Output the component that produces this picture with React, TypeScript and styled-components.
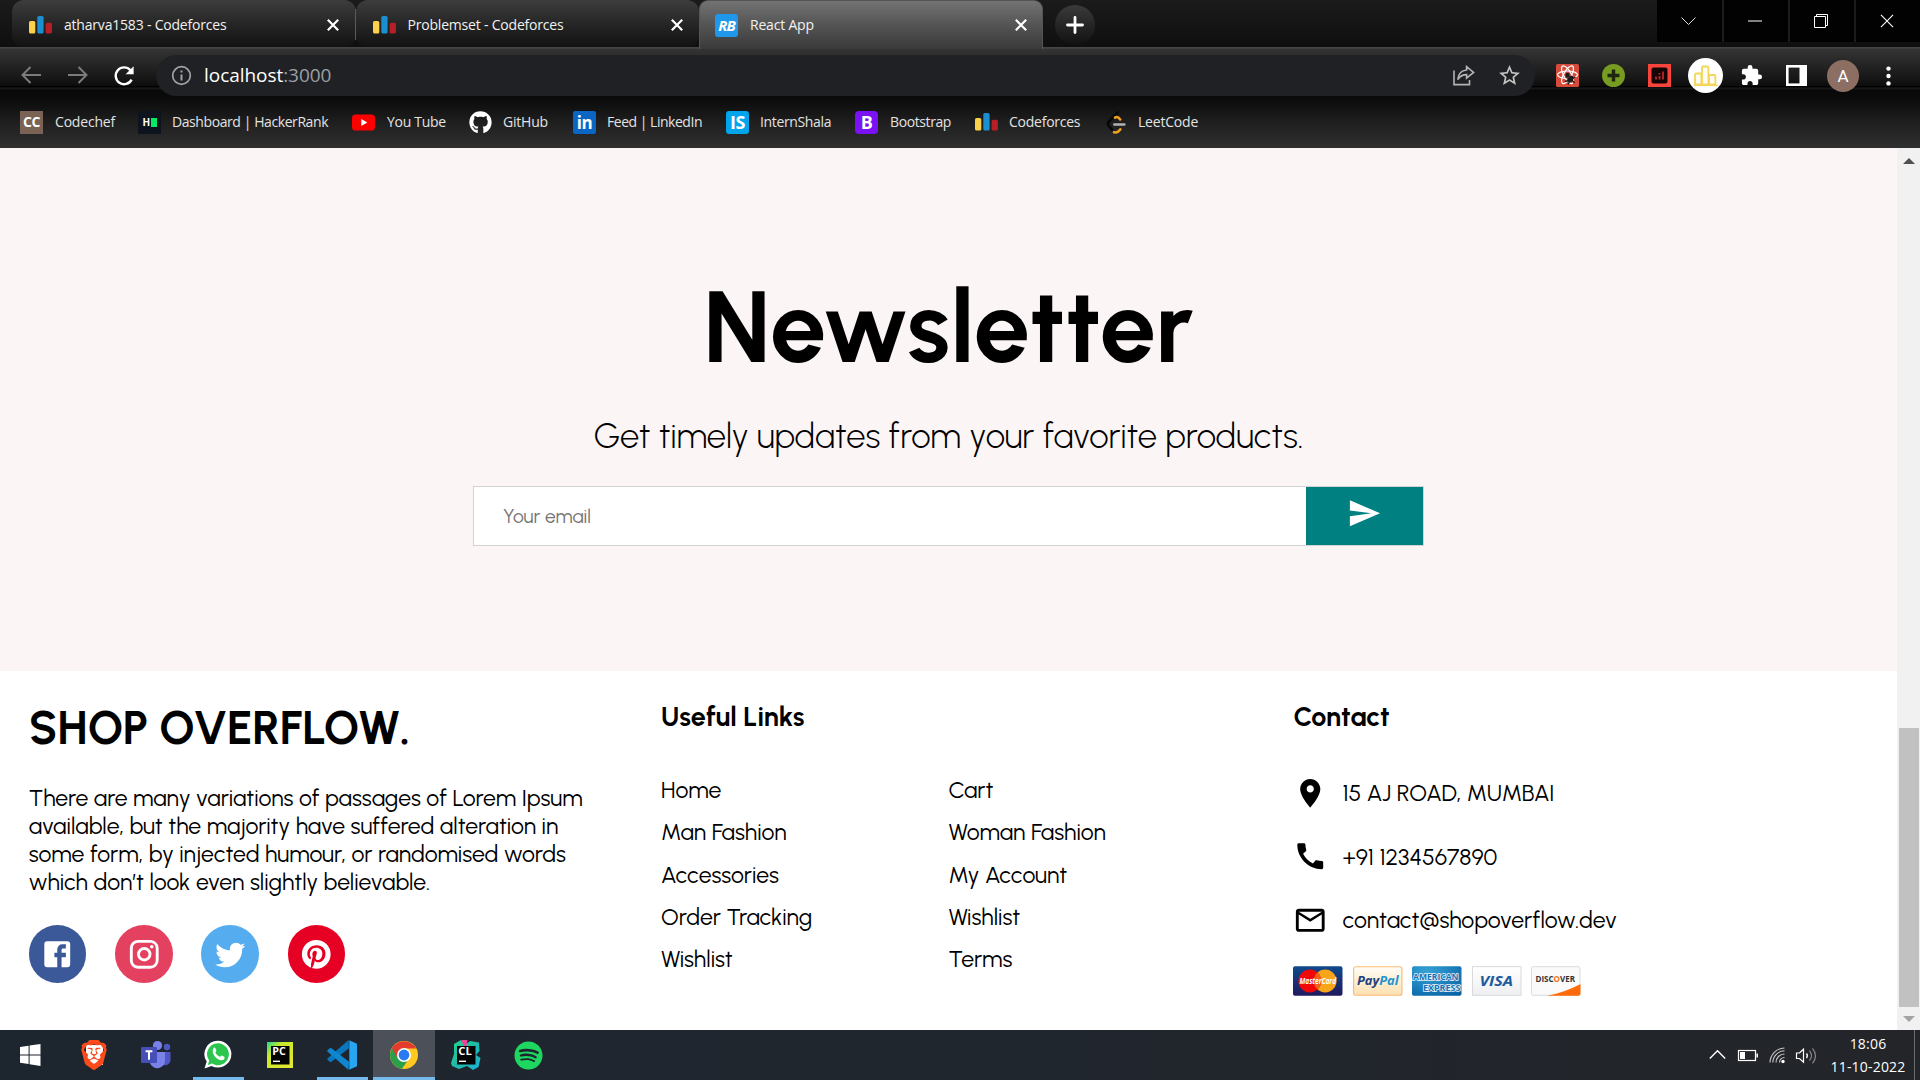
import React from 'react';
import styled, { createGlobalStyle, css } from 'styled-components';
import { FaGithub, FaSpotify } from 'react-icons/fa';
import { SiBrave } from 'react-icons/si';
import { MdExtension, MdStarOutline } from 'react-icons/md';

const ui = '"Segoe UI", "Open Sans", "Noto Sans", sans-serif';
const brand = 'Urbanist, Lato, sans-serif';

const GlobalStyle = createGlobalStyle`
  * { box-sizing: border-box; margin: 0; padding: 0; }
  body { width: 1920px; height: 1080px; overflow: hidden; background: #000; }
  svg { display: block; flex: none; }
`;

const Screen = styled.div`
  display: flex;
  flex-direction: column;
  width: 1920px;
  height: 1080px;
  font-family: ${ui};
`;

/* ---------- tab strip ---------- */

const TabStrip = styled.div`
  display: flex;
  height: 49px;
  padding-left: 12px;
  background: linear-gradient(#1b1b1b, #0f0f0f 47px, #484848 47px, #3c3c3c);
`;

const Tab = styled.div<{ $active?: boolean; $divider?: boolean }>`
  display: flex;
  align-items: center;
  width: 343.5px;
  height: 47px;
  padding: 3px 16px 0 17px;
  border-radius: 12px;
  background: linear-gradient(#3d3d3d, #262626 50%, #121212);
  color: #f1f1f1;
  ${p => p.$divider && css`
    border-image: linear-gradient(transparent 10px, #5a5a5a 10px, #5a5a5a 39px, transparent 39px) 1;
    border-right: 1px solid;
  `}
  ${p => p.$active && css`
    height: 49px;
    padding: 0 15px 0 15px;
    border: 1px solid #555;
    border-bottom: 0;
    border-radius: 9px 9px 0 0;
    background: linear-gradient(#737373, #575757 45%, #3a3a3a);
  `}
`;

const TabIcon = styled.span`
  display: flex;
  width: 23px;
  height: 23px;
  margin-right: 12px;
`;

const TabTitle = styled.span`
  flex: 1;
  font-size: 14px;
  letter-spacing: -0.2px;
  line-height: 20px;
  white-space: nowrap;
`;

const NewTab = styled.div`
  display: flex;
  align-items: center;
  justify-content: center;
  width: 40px;
  height: 40px;
  margin: 5px 0 0 12px;
  border-radius: 50%;
  background: linear-gradient(#3a3a3a, #111);
`;

const WindowButtons = styled.div`
  display: grid;
  grid-template-columns: 65px 64px 64px 64px;
  gap: 2px;
  width: 263px;
  height: 42px;
  margin-left: auto;
  background: #1c1c1c;
`;

const WindowButton = styled.div`
  display: flex;
  align-items: center;
  justify-content: center;
  padding-right: 2px;
  background: #020202;
`;

/* ---------- toolbar and bookmarks ---------- */

const ChromeBody = styled.div`
  height: 99px;
  background: linear-gradient(#343434, #161616 30px, #0c0c0c 37px, #000 37px, #000 38px, #1e1e1e 39px, #080808 41px, #0b0b0b 50px, #202020 75px, #2f2f2f 98px);
`;

const Toolbar = styled.div`
  display: flex;
  align-items: center;
  height: 53px;
  padding-left: 21px;
`;

const NavButtons = styled.div`
  display: flex;
  gap: 25px;
  width: 135px;
`;

const AddressBar = styled.div`
  display: flex;
  align-items: center;
  width: 1379px;
  height: 41px;
  padding: 0 13px 0 15px;
  border-radius: 21px;
  background: #202124;
`;

const Url = styled.span`
  flex: 1;
  margin: -2px 0 0 12px;
  color: #fff;
  font-size: 19px;
  letter-spacing: -0.05px;
  line-height: 26px;
`;

const Port = styled.span`
  color: #9aa0a6;
`;

const AddressActions = styled.div`
  display: flex;
  align-items: center;
  gap: 22px;
`;

const Extensions = styled.div`
  display: flex;
  align-items: center;
  padding-left: 21px;
  & > * { margin-right: 23px; }
`;

const CircleTile = styled.div`
  display: flex;
  align-items: center;
  justify-content: center;
  width: 35px;
  height: 35px;
  margin: 0 17px 0 -6px;
  border-radius: 50%;
  background: #fff;
`;

const Avatar = styled.div`
  width: 32px;
  height: 32px;
  margin: 0 27px 0 -3px;
  border-radius: 50%;
  background: #8d6e63;
  color: #fff;
  font: 17px/32px Roboto, sans-serif;
  text-align: center;
`;

const Bookmarks = styled.div`
  display: flex;
  align-items: center;
  height: 40px;
`;

const Bookmark = styled.div<{ $width: number; $gap: number; $track: number }>`
  display: flex;
  align-items: center;
  flex: none;
  gap: ${p => p.$gap}px;
  width: ${p => p.$width}px;
  color: #e3e3e3;
  font-size: 14px;
  letter-spacing: ${p => p.$track}px;
  line-height: 20px;
  white-space: nowrap;
  &:first-child { margin-left: 20px; }
`;

const Tile = styled.span<{ $bg: string; $size?: number; $radius?: number }>`
  display: flex;
  align-items: center;
  justify-content: center;
  flex: none;
  width: 23px;
  height: 23px;
  border-radius: ${p => p.$radius ?? 2}px;
  background: ${p => p.$bg};
  color: #fff;
  font: 700 ${p => p.$size ?? 15}px/1 "Open Sans", sans-serif;
  letter-spacing: -0.5px;
`;

const Script = styled.i`
  font: italic 700 15px/1 "Open Sans", sans-serif;
  letter-spacing: -1px;
`;

const Green = styled.span`
  width: 6px;
  height: 9px;
  margin-left: 1px;
  background: #00ea64;
`;

/* ---------- page ---------- */

const Viewport = styled.div`
  display: flex;
  height: 882px;
  font-family: ${brand};
  color: #000;
`;

const Page = styled.main`
  width: 1897px;
  background: #fff;
`;

const Scrollbar = styled.div`
  display: flex;
  flex-direction: column;
  align-items: center;
  width: 23px;
  padding: 10px 0 8px;
  background: #f1f1f1;
`;

const Thumb = styled.div`
  width: 20px;
  height: 279px;
  margin: auto 0 9px;
  background: #c1c1c1;
`;

const Newsletter = styled.section`
  display: flex;
  flex-direction: column;
  align-items: center;
  height: 523px;
  padding-top: 119px;
  background: #fcf5f5;
`;

const Title = styled.h1`
  font-size: 100.6px;
  font-weight: 700;
  line-height: 120px;
`;

const Tagline = styled.p`
  margin: 28px 0 29px;
  font-size: 34.5px;
  font-weight: 300;
  line-height: 42px;
`;

const EmailForm = styled.div`
  display: flex;
  width: 951px;
  height: 60px;
  border: 1px solid lightgray;
  background: #fff;
`;

const EmailInput = styled.input`
  flex: 1;
  padding-left: 29px;
  border: 0;
  outline: 0;
  font: 400 19.2px ${brand};
  &::placeholder { color: #757575; }
`;

const SendButton = styled.button`
  display: flex;
  justify-content: center;
  width: 117px;
  padding-top: 9px;
  border: 0;
  background: teal;
  color: #fff;
`;

const Footer = styled.footer`
  display: grid;
  grid-template-columns: repeat(3, 1fr);
`;

const Column = styled.div`
  padding: 30px 28.75px 0;
`;

const Logo = styled.h1`
  font-size: 46px;
  font-weight: 700;
  line-height: 55px;
`;

const Desc = styled.p`
  margin: 28px 0 29px;
  font-size: 23px;
  line-height: 28px;
`;

const Social = styled.div`
  display: flex;
  gap: 28.75px;
`;

const SocialIcon = styled.a<{ $bg: string }>`
  display: flex;
  align-items: center;
  justify-content: center;
  width: 57.5px;
  height: 57.5px;
  border-radius: 50%;
  background: ${p => p.$bg};
  color: #fff;
`;

const Heading = styled.h3`
  margin-bottom: 43px;
  font-size: 26.9px;
  font-weight: 700;
  line-height: 32px;
`;

const Links = styled.ul`
  display: grid;
  grid-template-columns: 1fr 1fr;
  grid-auto-rows: 42.25px;
  list-style: none;
  font-size: 23px;
  line-height: 28px;
`;

const ContactRow = styled.div`
  display: flex;
  align-items: center;
  gap: 14.5px;
  height: 34.5px;
  margin-bottom: 28.75px;
  font-size: 23px;
`;

const Cards = styled.div`
  display: flex;
  gap: 10px;
`;

/* ---------- taskbar ---------- */

const Taskbar = styled.div`
  display: flex;
  justify-content: space-between;
  height: 50px;
  background: linear-gradient(90deg, #1d252e, #20262e 50%, #232529);
  color: #fff;
`;

const Apps = styled.div`
  display: flex;
`;

const TaskApp = styled.div<{ $state?: 'running' | 'focused' }>`
  display: flex;
  align-items: center;
  justify-content: center;
  width: 62px;
  height: 50px;
  &:first-child { width: 63px; padding-right: 3px; }
  ${p => p.$state === 'running' && css`
    background: linear-gradient(#76b9ed, #76b9ed) center bottom / 51px 3px no-repeat;
  `}
  ${p => p.$state === 'focused' && css`
    background: linear-gradient(#76b9ed, #76b9ed) center bottom / 100% 3px no-repeat, #4c5159;
  `}
`;

const Tray = styled.div`
  display: flex;
  align-items: center;
`;

const Clock = styled.div`
  width: 84px;
  margin: 0 4px 0 6px;
  font-size: 14px;
  letter-spacing: 0.2px;
  line-height: 23px;
  text-align: center;
`;

const ShowDesktop = styled.div`
  width: 6px;
  height: 50px;
  border-left: 1px solid #6b6e72;
`;

/* ---------- drawings ---------- */

const Bars = () => (
  <svg width="23" height="23" viewBox="0 0 23 23">
    <rect x="0" y="7" width="6.3" height="12.5" rx="1.6" fill="#fbd14b" />
    <rect x="8.3" y="2" width="6.3" height="17.5" rx="1.6" fill="#1c8fd1" />
    <rect x="16.6" y="8.7" width="6.3" height="10.8" rx="1.6" fill="#b71f27" />
  </svg>
);

const Cross = ({ size = 12, w = 2.2 }: { size?: number; w?: number }) => (
  <svg width={size} height={size} viewBox="0 0 12 12" stroke="#fff" strokeWidth={w}>
    <path d="M.8 .8 11.2 11.2M11.2 .8 .8 11.2" />
  </svg>
);

const Plus = () => (
  <svg width="18" height="18" viewBox="0 0 18 18" stroke="#fff" strokeWidth="2.8" strokeLinecap="round">
    <path d="M9 1.5v15M1.5 9h15" />
  </svg>
);

const Arrow = ({ flip }: { flip?: boolean }) => (
  <svg width="21" height="20" viewBox="0 0 21 20" fill="none" stroke="#7c7c7c" strokeWidth="2">
    <path d={flip ? 'M1 10h18M11.5 2l8 8-8 8' : 'M20 10H2M9.5 2l-8 8 8 8'} />
  </svg>
);

const Reload = () => (
  <svg width="22" height="22" viewBox="0 0 22 22">
    <path d="M18.6 14.6A8.4 8.4 0 1 1 17.4 5.2" fill="none" stroke="#fff" strokeWidth="2.4" />
    <path d="M20.6 1.2v8h-8z" fill="#fff" />
  </svg>
);

const Info = () => (
  <svg width="21" height="21" viewBox="0 0 21 21" fill="none" stroke="#a0a4a8">
    <circle cx="10.5" cy="10.5" r="8.8" strokeWidth="1.7" />
    <path d="M10.5 9.4v6M10.5 5.5v2" strokeWidth="2" />
  </svg>
);

const Share = () => (
  <svg width="22" height="21" viewBox="0 0 22 21" fill="none" stroke="#b4b4b4" strokeWidth="1.6">
    <path d="M1 5.5V19.6H16.5V15" />
    <path d="M13.6 1.6 20.6 7.4 13.6 13V9.6C9.5 9.6 7 11 4.8 14.6 5.2 9 8.5 5.5 13.6 5Z" />
  </svg>
);

const ReactBug = () => (
  <svg width="23" height="23" viewBox="0 0 23 23">
    <rect width="23" height="23" rx="1.5" fill="#d84a3a" />
    <g fill="none" stroke="#fff" strokeWidth="1.2">
      <ellipse cx="11.5" cy="10.8" rx="10" ry="3.8" />
      <ellipse cx="11.5" cy="10.8" rx="10" ry="3.8" transform="rotate(60 11.5 10.8)" />
      <ellipse cx="11.5" cy="10.8" rx="10" ry="3.8" transform="rotate(120 11.5 10.8)" />
    </g>
    <ellipse cx="14.5" cy="15" rx="2.6" ry="3.8" fill="#1b1b1b" transform="rotate(35 14.5 15)" />
    <circle cx="11.5" cy="11" r="2.2" fill="#1b1b1b" />
    <path d="M9.5 13.5l3 1M9 17.5l4-1M19.5 13l-3 1.5M18.5 19l-2.5-3M12 20.5l1.5-3" stroke="#1b1b1b" strokeWidth="1.3" />
  </svg>
);

const GreenPlus = () => (
  <svg width="23" height="23" viewBox="0 0 23 23">
    <circle cx="11.5" cy="11.5" r="11.5" fill="#769c22" />
    <path d="M11.5 5.5v12M5.5 11.5h12" stroke="#20250f" strokeWidth="3.4" />
  </svg>
);

const RedChart = () => (
  <svg width="23" height="23" viewBox="0 0 23 23">
    <rect width="23" height="23" fill="#f8443a" />
    <rect x="3.5" y="3.5" width="16" height="16" rx="2" fill="#160405" />
    <path d="M8 15.5v-3M11.5 15.5v-3.6M11.5 10.5v-1.6M15 15.5v-8" stroke="#c22a2a" strokeWidth="1.7" />
  </svg>
);

const GoldBars = () => (
  <svg width="25" height="22" viewBox="0 0 25 22" fill="#fffdf3" stroke="#f3d65a" strokeWidth="1.8">
    <rect x="2" y="8.5" width="6.4" height="11" rx="1" />
    <rect x="9" y="1.5" width="6.4" height="18" rx="1" />
    <rect x="16" y="10" width="6.4" height="9.5" rx="1" />
    <path d="M.5 20.3h24" strokeWidth="1.6" />
  </svg>
);

const SidePanel = () => (
  <svg width="21" height="21" viewBox="0 0 21 21">
    <rect x="1.3" y="1.3" width="18.4" height="18.4" fill="none" stroke="#fff" strokeWidth="2.6" />
    <rect x="13.5" y="0" width="7.5" height="21" fill="#fff" />
  </svg>
);

const Dots = () => (
  <svg width="5" height="20" viewBox="0 0 5 20" fill="#fff">
    <circle cx="2.5" cy="2.6" r="2.2" /><circle cx="2.5" cy="10" r="2.2" /><circle cx="2.5" cy="17.4" r="2.2" />
  </svg>
);

const YouTube = () => (
  <svg width="23" height="23" viewBox="0 0 23 23">
    <rect y="3.5" width="23" height="16" rx="3.6" fill="#f00" />
    <path d="M9.3 8v7l6-3.5z" fill="#fff" />
  </svg>
);

const LeetCode = () => (
  <svg width="20" height="23" viewBox="0 0 20 23" fill="none" strokeWidth="2.6" strokeLinecap="round">
    <path d="M11.5 1.5 3 10.5a3.4 3.4 0 0 0 0 4.6l3.4 4" stroke="#070707" />
    <path d="M9 6.6c1.8-1.2 3.3-.8 5.2 1.8" stroke="#f2a11f" />
    <path d="M8 21.2c2.5.8 4.5 0 6.3-2.8" stroke="#f2a11f" />
    <path d="M8.3 13.5h10" stroke="#b3b3b3" />
  </svg>
);

const MuiIcon = ({ d, size = 34.5 }: { d: string; size?: number }) => (
  <svg width={size} height={size} viewBox="0 0 24 24" fill="currentColor"><path d={d} /></svg>
);

const paths = {
  send: 'M2.01 21 23 12 2.01 3 2 10l15 2-15 2z',
  room: 'M12 2C8.13 2 5 5.13 5 9c0 5.25 7 13 7 13s7-7.75 7-13c0-3.87-3.13-7-7-7zm0 9.5c-1.38 0-2.5-1.12-2.5-2.5s1.12-2.5 2.5-2.5 2.5 1.12 2.5 2.5-1.12 2.5-2.5 2.5z',
  phone: 'M20.01 15.38c-1.23 0-2.42-.2-3.53-.56-.35-.12-.74-.03-1.01.24l-1.57 1.97c-2.83-1.35-5.48-3.9-6.89-6.83l1.95-1.66c.27-.28.35-.67.24-1.02-.37-1.11-.56-2.3-.56-3.53 0-.54-.45-.99-.99-.99H4.19C3.65 3 3 3.24 3 3.99 3 13.28 10.73 21 20.01 21c.71 0 .99-.63.99-1.18v-3.45c0-.54-.45-.99-.99-.99z',
  mail: 'M20 4H4c-1.1 0-1.99.9-1.99 2L2 18c0 1.1.9 2 2 2h16c1.1 0 2-.9 2-2V6c0-1.1-.9-2-2-2zm0 14H4V8l8 5 8-5v10zm-8-7L4 6h16l-8 5z',
  facebook: 'M5 3h14a2 2 0 0 1 2 2v14a2 2 0 0 1-2 2H5a2 2 0 0 1-2-2V5a2 2 0 0 1 2-2m13 2h-2.5A3.5 3.5 0 0 0 12 8.5V11h-2v3h2v7h3v-7h3v-3h-3V9a1 1 0 0 1 1-1h2V5z',
  instagram: 'M7.8 2h8.4C19.4 2 22 4.6 22 7.8v8.4a5.8 5.8 0 0 1-5.8 5.8H7.8C4.6 22 2 19.4 2 16.2V7.8A5.8 5.8 0 0 1 7.8 2m-.2 2A3.6 3.6 0 0 0 4 7.6v8.8C4 18.39 5.61 20 7.6 20h8.8a3.6 3.6 0 0 0 3.6-3.6V7.6C20 5.61 18.39 4 16.4 4H7.6m9.65 1.5a1.25 1.25 0 0 1 1.25 1.25A1.25 1.25 0 0 1 17.25 8 1.25 1.25 0 0 1 16 6.75a1.25 1.25 0 0 1 1.25-1.25M12 7a5 5 0 0 1 5 5 5 5 0 0 1-5 5 5 5 0 0 1-5-5 5 5 0 0 1 5-5m0 2a3 3 0 0 0-3 3 3 3 0 0 0 3 3 3 3 0 0 0 3-3 3 3 0 0 0-3-3z',
  twitter: 'M22.46 6c-.77.35-1.6.58-2.46.69.88-.53 1.56-1.37 1.88-2.38-.83.5-1.75.85-2.72 1.05C18.37 4.5 17.26 4 16 4c-2.35 0-4.27 1.92-4.27 4.29 0 .34.04.67.11.98C8.28 9.09 5.11 7.38 3 4.79c-.37.63-.58 1.37-.58 2.15 0 1.49.75 2.81 1.91 3.56-.71 0-1.37-.2-1.95-.5v.03c0 2.08 1.48 3.82 3.44 4.21a4.22 4.22 0 0 1-1.93.07 4.28 4.28 0 0 0 4 2.98 8.521 8.521 0 0 1-5.33 1.84c-.34 0-.68-.02-1.02-.06C3.44 20.29 5.7 21 8.12 21 16 21 20.33 14.46 20.33 8.79c0-.19 0-.37-.01-.56.84-.6 1.56-1.36 2.14-2.23z',
  pinterest: 'M9.04 21.54c.96.29 1.93.46 2.96.46a10 10 0 0 0 10-10A10 10 0 0 0 12 2 10 10 0 0 0 2 12c0 4.25 2.67 7.9 6.44 9.34-.09-.78-.18-2.07 0-2.96l1.15-4.94s-.29-.58-.29-1.5c0-1.38.86-2.41 1.84-2.41.86 0 1.26.63 1.26 1.44 0 .86-.57 2.09-.86 3.27-.17.98.52 1.84 1.52 1.84 1.78 0 3.16-1.9 3.16-4.58 0-2.4-1.72-4.04-4.19-4.04-2.82 0-4.48 2.1-4.48 4.31 0 .86.28 1.73.74 2.3.09.06.09.14.06.29l-.29 1.09c0 .17-.11.23-.28.11-1.28-.56-2.02-2.38-2.02-3.85 0-3.16 2.24-6.03 6.56-6.03 3.44 0 6.12 2.47 6.12 5.75 0 3.44-2.13 6.2-5.18 6.2-.97 0-1.92-.52-2.26-1.13l-.67 2.37c-.23.86-.86 2.01-1.29 2.7v-.03z',
};

const CardSvg = styled.svg.attrs({ width: 49.5, height: 30, viewBox: '0 0 50 30' })`
  overflow: visible;
  font-family: "Open Sans", sans-serif;
  font-weight: 700;
`;

const Slanted = styled.text`
  font-style: italic;
`;

const PaymentCards = () => (
  <Cards>
    <CardSvg>
      <defs><linearGradient id="mc" x2="0" y2="1"><stop stopColor="#0f4a8c" /><stop offset="1" stopColor="#201a5e" /></linearGradient></defs>
      <rect width="50" height="30" rx="2" fill="url(#mc)" />
      <circle cx="32.5" cy="15" r="11.5" fill="#f9a51a" />
      <circle cx="17" cy="15" r="11.5" fill="#f00808" />
      <path d="M24.75 6.5a11.5 11.5 0 0 1 0 17 11.5 11.5 0 0 1 0-17z" fill="#f4601a" />
      <Slanted x="6.5" y="18.5" fontSize="9" textLength="37" lengthAdjust="spacingAndGlyphs" fill="#fff">MasterCard</Slanted>
    </CardSvg>
    <CardSvg>
      <defs><linearGradient id="pp" x2="0" y2="1"><stop stopColor="#fffdf8" /><stop offset="1" stopColor="#fde0b0" /></linearGradient></defs>
      <rect x=".6" y=".6" width="48.8" height="28.8" rx="2" fill="url(#pp)" stroke="#f9bd76" strokeWidth="1.2" />
      <Slanted x="4" y="19" fontSize="12.5" textLength="42" lengthAdjust="spacingAndGlyphs" fill="#1d3f80">Pay<tspan fill="#1f93d0">Pal</tspan></Slanted>
    </CardSvg>
    <CardSvg>
      <defs><radialGradient id="ax" cx=".3" cy=".2" r="1"><stop stopColor="#36a3d6" /><stop offset="1" stopColor="#0560a4" /></radialGradient></defs>
      <rect width="50" height="30" rx="2" fill="url(#ax)" />
      <g fill="#1673b5" stroke="#e7f4fb" strokeWidth="1.6" paintOrder="stroke" fontSize="9.5">
        <text x="1" y="14.5" textLength="46" lengthAdjust="spacingAndGlyphs">AMERICAN</text>
        <text x="11" y="25" textLength="38" lengthAdjust="spacingAndGlyphs">EXPRESS</text>
      </g>
    </CardSvg>
    <CardSvg>
      <defs>
        <linearGradient id="vi" x2="0" y2="1"><stop stopColor="#fff" /><stop offset="1" stopColor="#eeeff1" /></linearGradient>
        <linearGradient id="vt" x2="1" y2=".25"><stop offset=".08" stopColor="#f2ac2c" /><stop offset=".14" stopColor="#1f5a9c" /></linearGradient>
      </defs>
      <rect x=".5" y=".5" width="49" height="29" fill="url(#vi)" stroke="#d9dadb" />
      <Slanted x="7.5" y="20.5" fontSize="14.5" textLength="34" lengthAdjust="spacingAndGlyphs" fill="url(#vt)">VISA</Slanted>
    </CardSvg>
    <CardSvg>
      <rect x=".5" y=".5" width="49" height="29" rx="2" fill="#fafafa" stroke="#dcdcdc" />
      <path d="M16 30c13-2.5 24-6.5 34-12v10a2 2 0 0 1-2 2z" fill="#ff6b0a" />
      <text x="4.5" y="16.5" fontSize="8.5" textLength="40" lengthAdjust="spacingAndGlyphs" fill="#333">DISC<tspan fill="#f36f21">O</tspan>VER</text>
    </CardSvg>
  </Cards>
);

const Windows = () => (
  <svg width="21" height="22" viewBox="0 0 21 22" fill="#fff">
    <path d="M0 3 8.6 1.8V10.4H0zM9.6 1.6 20.5 0V10.4H9.6zM0 11.4H8.6V20L0 18.8zM9.6 11.4H20.5V22L9.6 20.3z" />
  </svg>
);

const BraveMark = styled.span`
  display: flex;
  background: linear-gradient(#fff, #fff) center / 17px 20px no-repeat;
`;

const Teams = () => (
  <svg width="30" height="30" viewBox="0 0 30 30">
    <circle cx="26" cy="7" r="3.2" fill="#4f57c4" />
    <path d="M20 12h9.5v8.5a5.5 5.5 0 0 1-9.5 3z" fill="#4f57c4" />
    <circle cx="16.5" cy="5.5" r="4.6" fill="#7a82ea" />
    <path d="M9 12h15v9a7.7 7.7 0 0 1-15 2z" fill="#7a82ea" />
    <rect y="7" width="16" height="16" rx="1.2" fill="#464eb8" />
    <path d="M4.6 11.3h6.8M8 11.3v8.5" stroke="#fff" strokeWidth="2" />
  </svg>
);

const WhatsApp = () => (
  <svg width="28" height="30" viewBox="0 0 28 30">
    <path d="M14 .8A13.3 13.3 0 0 1 14 27.5 13.5 13.5 0 0 1 7.5 26L.5 28.5 2.7 21.5A13.3 13.3 0 0 1 14 .8z" fill="#fff" />
    <path d="M14 3.2a11 11 0 1 1-6 20.3l-4.2 1.4 1.4-4.2A11 11 0 0 1 14 3.2z" fill="#2cc64f" />
    <path d="M9.3 8.2c.8-.9 1.7-.8 2.1.1l.9 2.2c.3.7-1.1 1.7-.9 2.2 1 1.8 2.5 3.1 4.4 4 .7.2 1.3-1.5 2-1.2l2.4 1.2c.7.4.4 1.9-.4 2.7-3.4 3.3-13.7-4.2-10.5-11.2z" fill="#fff" />
  </svg>
);

const JetTile = ({ label, clion }: { label: string; clion?: boolean }) => (
  <svg width="30" height="30" viewBox="0 0 30 30">
    <defs>
      <linearGradient id="pc" x2="1" y2="1"><stop stopColor="#21d789" /><stop offset=".3" stopColor="#c8ea2c" /><stop offset="1" stopColor="#e6e832" /></linearGradient>
      <linearGradient id="cl" x2="1" y2="1"><stop stopColor="#21d789" /><stop offset=".5" stopColor="#1fb9a8" /><stop offset="1" stopColor="#18b5d8" /></linearGradient>
    </defs>
    {clion
      ? <><path d="M3 4 10 0 14 5 19 1 28 2.5 28.5 11 25 15 29.5 18 27.5 27 22 30 16 26 8 29 1 26 0 23 3 14z" fill="url(#cl)" /><path d="M10.5 0h6l-1 6h-3z" fill="#f0439a" /></>
      : <rect x="2" y="2" width="26" height="26" fill="url(#pc)" />}
    <rect x="6" y="6" width="18.5" height="18.5" fill="#050505" />
    <text x="7.3" y="15" fontSize="10" fontWeight="700" fontFamily="Open Sans, sans-serif" fill="#fff" textLength="13.5" lengthAdjust="spacingAndGlyphs">{label}</text>
    <path d="M8 21.3h7" stroke="#fff" strokeWidth="1.4" />
  </svg>
);

const VSCode = () => (
  <svg width="30" height="30" viewBox="0 0 30 30">
    <path d="M22 8.2 4.5 21.8a1.4 1.4 0 0 1-1.7 0L.7 20a1.3 1.3 0 0 1 0-1.8L21.5 0z" fill="#0a76bd" />
    <path d="M22 21.8 4.5 8.2a1.4 1.4 0 0 0-1.7 0L.7 10a1.3 1.3 0 0 0 0 1.8L21.5 30z" fill="#0e86d0" />
    <path d="M21.5 0 29 3.3a1.6 1.6 0 0 1 1 1.5v20.4a1.6 1.6 0 0 1-1 1.5L21.5 30c1 0 .8-.8.8-2V2c0-1.2.2-2-.8-2z" fill="#27a4f2" />
  </svg>
);

const Chrome = () => (
  <svg width="28" height="28" viewBox="0 0 28 28">
    <circle cx="14" cy="14" r="14" fill="#ffc91f" />
    <path d="M14 14 1.88 7A14 14 0 0 0 12 27.85L19.5 17z" fill="#2c9f4b" />
    <path d="M14 14 6.6 15.5 1.88 7A14 14 0 0 1 26.12 7.5H14z" fill="#e33b2e" />
    <circle cx="14" cy="14" r="7" fill="#fff" />
    <circle cx="14" cy="14" r="5.4" fill="#2a7bf0" />
  </svg>
);

const TrayIcons = () => (
  <svg width="112" height="20" viewBox="0 0 112 20" fill="none" stroke="#fff">
    <path d="M1.800 13.500 9.500 5.700 17.200 13.500" strokeWidth="1.4" />
    <rect x="30.5" y="5.5" width="17" height="10" strokeWidth="1.2" />
    <path d="M49.2 8.5v4" strokeWidth="1.5" />
    <rect x="32" y="7" width="5" height="7" fill="#fff" stroke="none" />
    <circle cx="75" cy="16.5" r="1.7" fill="#fff" stroke="none" />
    <path d="M71.5 17.5a5 5 0 0 1 5-5M68 17.5a8.5 8.5 0 0 1 8.5-8.5M64.8 17.5A12 12 0 0 1 76.5 5.8M62 17.5A14.8 14.8 0 0 1 76.5 3" stroke="#c9c9c9" strokeWidth="1.1" />
    <path d="M88.5 8h3l4-3.8v13L91.5 13.5h-3z" strokeWidth="1.2" />
    <path d="M98.5 8.5q1.7 2.2 0 4.5" strokeWidth="1.3" />
    <path d="M101.5 5.7q4 5 0 10M104.5 3.3q6 7.5 0 15" stroke="#85878a" strokeWidth="1.2" />
  </svg>
);

/* ---------- data ---------- */

const links = [
  'Home', 'Cart', 'Man Fashion', 'Woman Fashion', 'Accessories',
  'My Account', 'Order Tracking', 'Wishlist', 'Wishlist', 'Terms',
];

const bookmarks: { label: string; width: number; gap: number; track: number; icon: React.ReactNode }[] = [
  { label: 'Codechef', width: 118, gap: 12, track: -0.19, icon: <Tile $bg="#7a6254" $size={14} $radius={0}>CC</Tile> },
  { label: 'Dashboard | HackerRank', width: 214, gap: 11, track: -0.42, icon: <Tile $bg="#0e141e" $size={10} $radius={0}>H<Green /></Tile> },
  { label: 'You Tube', width: 117, gap: 12, track: -0.28, icon: <YouTube /> },
  { label: 'GitHub', width: 104, gap: 11, track: -0.2, icon: <FaGithub size={23} color="#fff" /> },
  { label: 'Feed | LinkedIn', width: 153, gap: 11, track: -0.48, icon: <Tile $bg="#0a66c2" $size={17}>in</Tile> },
  { label: 'InternShala', width: 129, gap: 11, track: -0.36, icon: <Tile $bg="#00a5ec" $size={18} $radius={3}>IS</Tile> },
  { label: 'Bootstrap', width: 120, gap: 12, track: -0.4, icon: <Tile $bg="#7a12f5" $size={18} $radius={4}>B</Tile> },
  { label: 'Codeforces', width: 131, gap: 11, track: -0.25, icon: <Bars /> },
  { label: 'LeetCode', width: 100, gap: 12, track: -0.2, icon: <LeetCode /> },
];

export default function App() {
  return (
    <Screen>
      <GlobalStyle />
      <TabStrip>
        <Tab $divider><TabIcon><Bars /></TabIcon><TabTitle>atharva1583 - Codeforces</TabTitle><Cross /></Tab>
        <Tab><TabIcon><Bars /></TabIcon><TabTitle>Problemset - Codeforces</TabTitle><Cross /></Tab>
        <Tab $active>
          <TabIcon><Tile $bg="#1f98ec" $radius={3}><Script>RB</Script></Tile></TabIcon>
          <TabTitle>React App</TabTitle><Cross />
        </Tab>
        <NewTab><Plus /></NewTab>
        <WindowButtons>
          <WindowButton><svg width="15" height="9" viewBox="0 0 15 9" fill="none" stroke="#ddd"><path d="M.5 .5l7 7 7-7" /></svg></WindowButton>
          <WindowButton><svg width="14" height="2" viewBox="0 0 14 2"><rect y=".5" width="14" height="1" fill="#fff" /></svg></WindowButton>
          <WindowButton><svg width="14" height="14" viewBox="0 0 14 14" fill="none" stroke="#fff"><path d="M.5 2.5h11v11H.5zM2.5 2.5v-2h11v11h-2" /></svg></WindowButton>
          <WindowButton><Cross size={14} w={0.95} /></WindowButton>
        </WindowButtons>
      </TabStrip>
      <ChromeBody>
        <Toolbar>
          <NavButtons><Arrow /><Arrow flip /><Reload /></NavButtons>
          <AddressBar>
            <Info />
            <Url>localhost<Port>:3000</Port></Url>
            <AddressActions><Share /><MdStarOutline size={25} color="#c4c4c4" /></AddressActions>
          </AddressBar>
          <Extensions>
            <ReactBug />
            <GreenPlus />
            <RedChart />
            <CircleTile><GoldBars /></CircleTile>
            <MdExtension size={23} color="#fff" />
            <SidePanel />
            <Avatar>A</Avatar>
            <Dots />
          </Extensions>
        </Toolbar>
        <Bookmarks>
          {bookmarks.map(b => (
            <Bookmark key={b.label} $width={b.width} $gap={b.gap} $track={b.track}>{b.icon}{b.label}</Bookmark>
          ))}
        </Bookmarks>
      </ChromeBody>
      <Viewport>
        <Page>
          <Newsletter>
            <Title>Newsletter</Title>
            <Tagline>Get timely updates from your favorite products.</Tagline>
            <EmailForm>
              <EmailInput placeholder="Your email" />
              <SendButton><MuiIcon d={paths.send} /></SendButton>
            </EmailForm>
          </Newsletter>
          <Footer>
            <Column>
              <Logo>SHOP OVERFLOW.</Logo>
              <Desc>
                There are many variations of passages of Lorem Ipsum available, but the majority have
                suffered alteration in some form, by injected humour, or randomised words which don’t
                look even slightly believable.
              </Desc>
              <Social>
                <SocialIcon $bg="#3b5999"><MuiIcon d={paths.facebook} /></SocialIcon>
                <SocialIcon $bg="#e4405f"><MuiIcon d={paths.instagram} /></SocialIcon>
                <SocialIcon $bg="#55acee"><MuiIcon d={paths.twitter} /></SocialIcon>
                <SocialIcon $bg="#e60023"><MuiIcon d={paths.pinterest} /></SocialIcon>
              </Social>
            </Column>
            <Column>
              <Heading>Useful Links</Heading>
              <Links>{links.map((label, i) => <li key={i}>{label}</li>)}</Links>
            </Column>
            <Column>
              <Heading>Contact</Heading>
              <ContactRow><MuiIcon d={paths.room} />15 AJ ROAD, MUMBAI</ContactRow>
              <ContactRow><MuiIcon d={paths.phone} />+91 1234567890</ContactRow>
              <ContactRow><MuiIcon d={paths.mail} />contact@shopoverflow.dev</ContactRow>
              <PaymentCards />
            </Column>
          </Footer>
        </Page>
        <Scrollbar>
          <svg width="12" height="6" viewBox="0 0 12 6"><path d="M0 6 6 0l6 6z" fill="#505050" /></svg>
          <Thumb />
          <svg width="12" height="6" viewBox="0 0 12 6"><path d="M0 0h12L6 6z" fill="#a3a3a3" /></svg>
        </Scrollbar>
      </Viewport>
      <Taskbar>
        <Apps>
          <TaskApp><Windows /></TaskApp>
          <TaskApp><BraveMark><SiBrave size={30} color="#fb4a1c" /></BraveMark></TaskApp>
          <TaskApp><Teams /></TaskApp>
          <TaskApp $state="running"><WhatsApp /></TaskApp>
          <TaskApp><JetTile label="PC" /></TaskApp>
          <TaskApp $state="running"><VSCode /></TaskApp>
          <TaskApp $state="focused"><Chrome /></TaskApp>
          <TaskApp><JetTile label="CL" clion /></TaskApp>
          <TaskApp><FaSpotify size={29} color="#1ed760" /></TaskApp>
        </Apps>
        <Tray>
          <TrayIcons />
          <Clock>18:06<br />11-10-2022</Clock>
          <ShowDesktop />
        </Tray>
      </Taskbar>
    </Screen>
  );
}
